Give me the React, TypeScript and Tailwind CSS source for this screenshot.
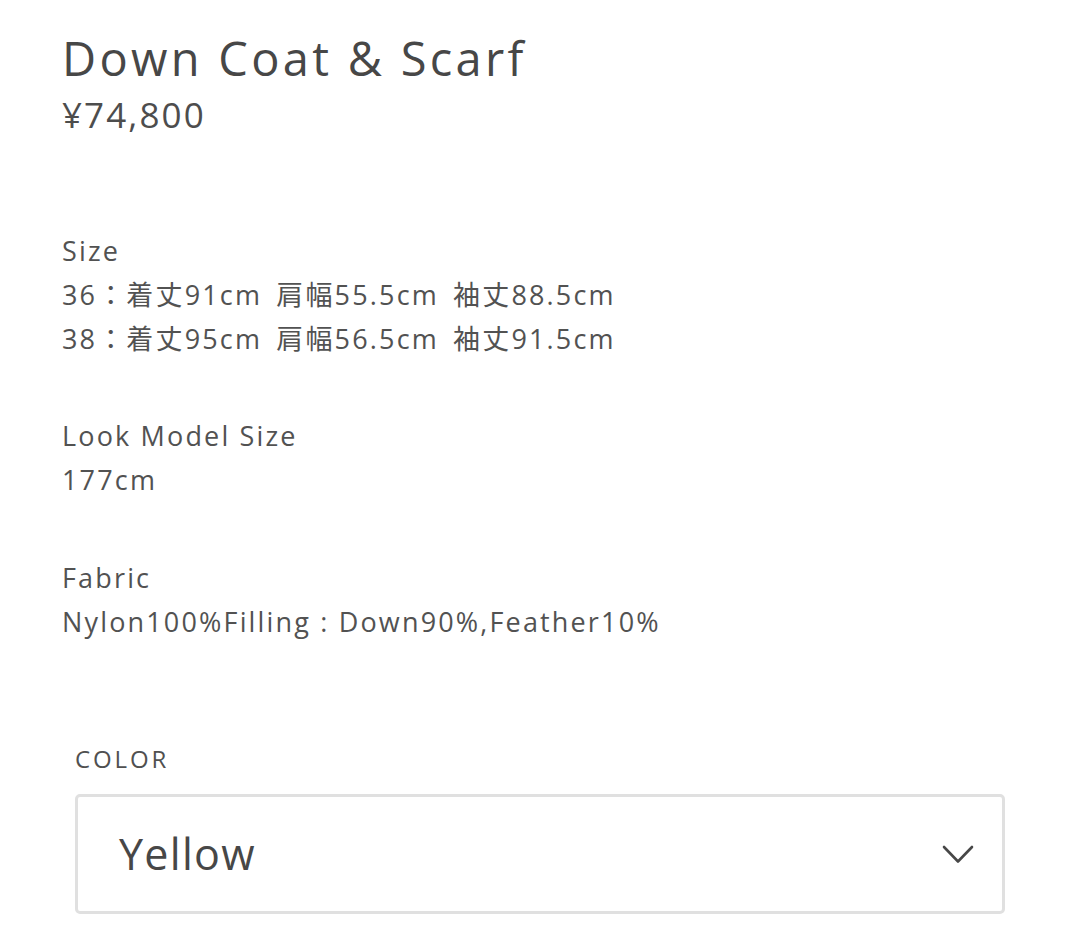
const font = { fontFamily: '"Open Sans", "Noto Sans CJK JP", sans-serif' };

function Chevron() {
  return (
    <svg width="32" height="19" viewBox="0 0 32 19" fill="none" className="text-[#474747]">
      <polyline points="2,2 16,16.5 30,2" stroke="currentColor" strokeWidth="2.6" strokeLinecap="round" strokeLinejoin="round" />
    </svg>
  );
}

export default function App() {
  return (
    <div className="min-h-[940px] w-[1080px] bg-white text-[#4a4a4a]" style={font}>
      <div className="pl-[62px] pr-[75px] pt-[28px]">
        <h1 className="text-[47px] leading-[60px] tracking-[0.07em] font-normal text-[#474747]">
          Down Coat &amp; Scarf
        </h1>
        <p className="mt-[4px] text-[35px] leading-[46px] tracking-[0.06em] text-[#4d4d4d]">¥74,800</p>

        <div className="mt-[91px] text-[27px] leading-[44px] tracking-[0.08em] text-[#525252]">
          <div className="[word-spacing:5px]">
            <p>Size</p>
            <p>36：着丈91cm 肩幅55.5cm 袖丈88.5cm</p>
            <p>38：着丈95cm 肩幅56.5cm 袖丈91.5cm</p>
          </div>
          <div className="mt-[53px]">
            <p>Look Model Size</p>
            <p>177cm</p>
          </div>
          <div className="mt-[54px]">
            <p>Fabric</p>
            <p>Nylon100%Filling : Down90%,Feather10%</p>
          </div>
        </div>

        <div className="ml-[13px] mt-[100px]">
          <label className="block text-[24px] leading-[30px] tracking-[0.12em] text-[#505050]">COLOR</label>
          <div className="mt-[20px] flex h-[120px] items-center justify-between rounded-[5px] border-[3px] border-[#e0e0e0] pl-[41px] pr-[28px]">
            <span className="text-[43px] tracking-[0.03em] text-[#474747]">Yellow</span>
            <Chevron />
          </div>
        </div>
      </div>
    </div>
  );
}
